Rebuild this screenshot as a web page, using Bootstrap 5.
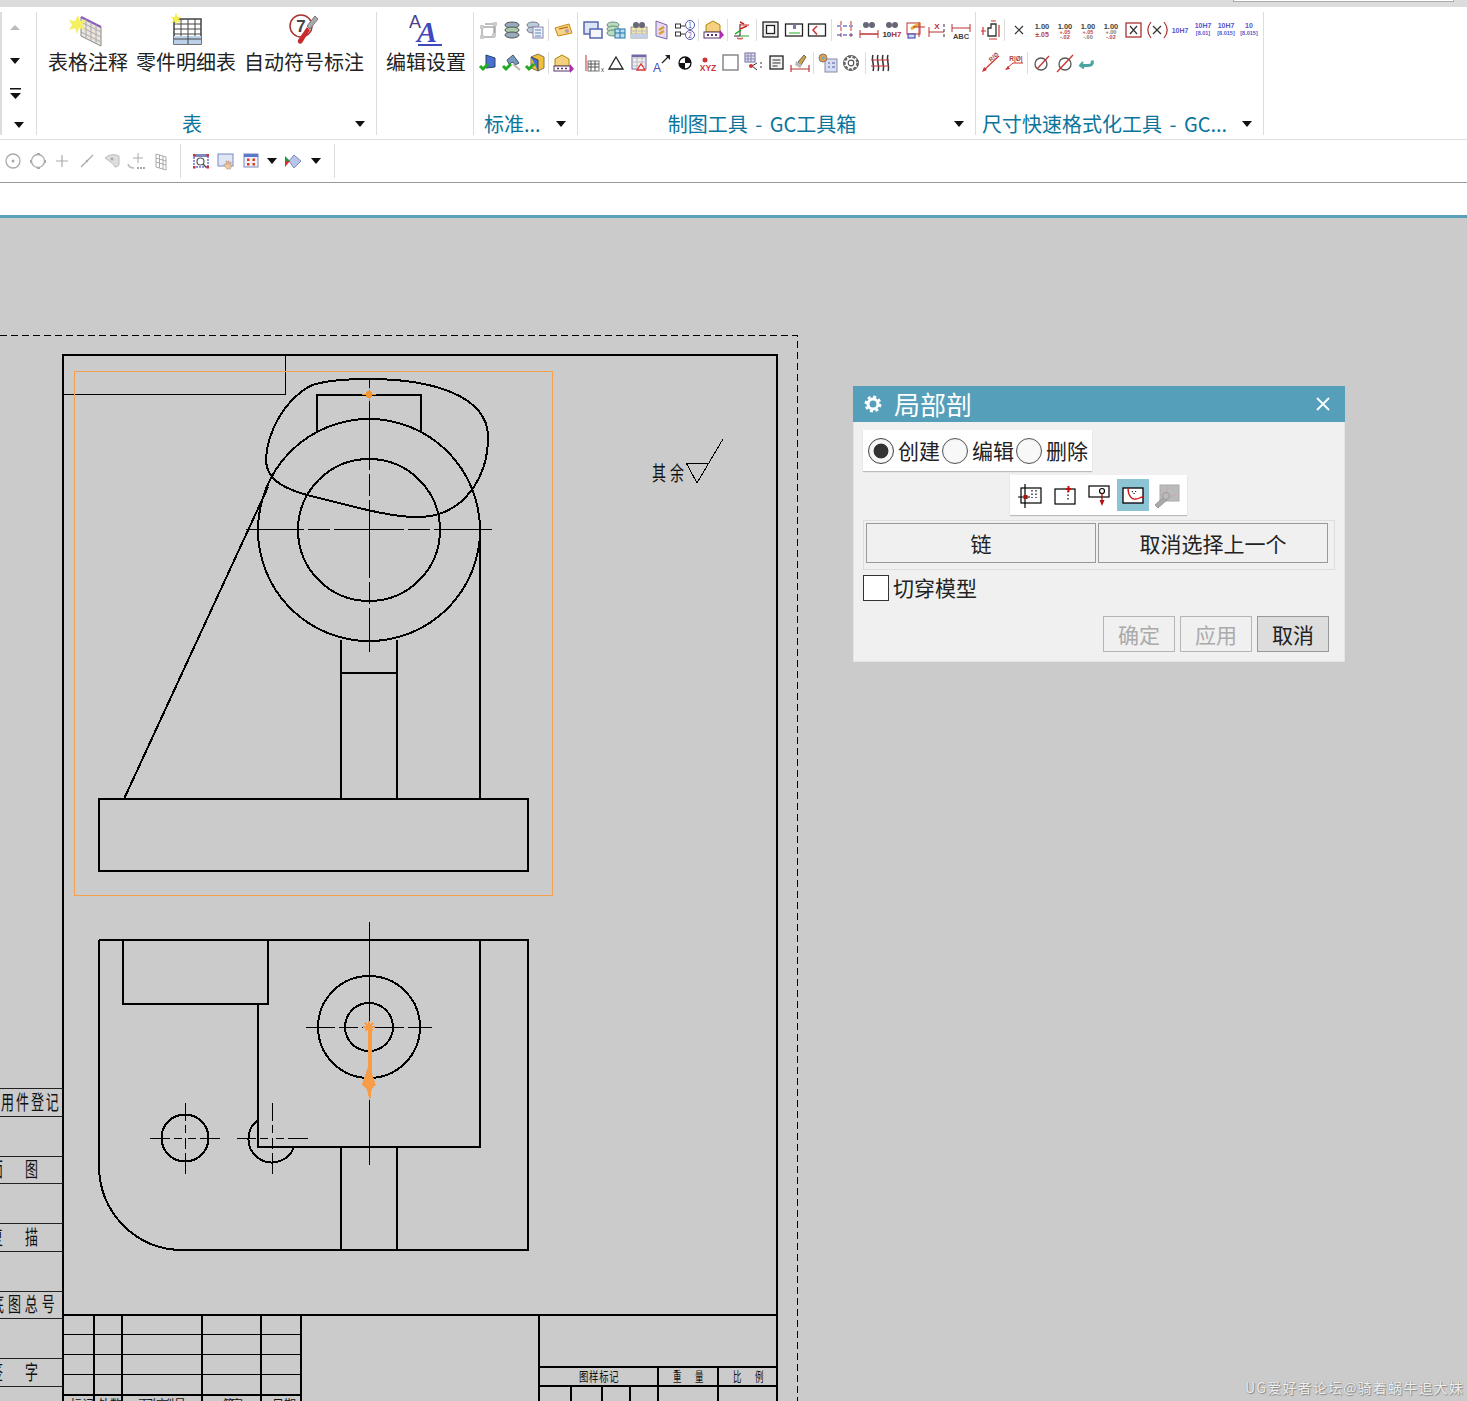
<!DOCTYPE html>
<html lang="zh-CN"><head><meta charset="utf-8"><title>局部剖</title>
<link href="https://cdn.jsdelivr.net/npm/bootstrap@5.3.0/dist/css/bootstrap.min.css" rel="stylesheet">
<style>
:root{--cjk:"Noto Sans CJK SC","Liberation Sans",sans-serif}
html,body{margin:0;height:1401px;overflow:hidden;background:#fff;font-family:var(--cjk);color:#222}
.topstrip{height:7px;background:#dcdcdc;position:relative}
.topbox{position:absolute;left:1233px;top:0;width:221px;height:2px;background:#fff;border:solid #aaa;border-width:0 1px 1px}
.ribbon{height:133px;padding-top:5px;border-bottom:1px solid #ddd}
.grp{height:123px;border-right:1px solid #ddd;flex:none}
.g0{width:37px;position:relative;border-left:2px solid #ddd}
.g1{width:340px}.g2{width:97px}.g3{width:104px}.g4{width:398px}.g5{width:288px}
.bigs{height:101px;padding:1px 0 0 11px;gap:8px}
.bigbtn{font-size:20px;line-height:26px;white-space:nowrap;text-align:center}
.bigbtn svg{display:block;margin:0 auto 2px;width:34px;height:34px}
.labelrow{padding-top:2px}
.glabel{height:22px;font-size:20px;line-height:22px;color:#0a759c;white-space:nowrap;word-spacing:3px}
.gl{text-align:center}
.caret{width:0;height:0;border:5px solid transparent;border-top:6px solid #111;border-bottom:0;flex:none}
.icons{height:101px;padding:7px 0 0 3px;gap:11px}
.ic{width:23px;height:22px;flex:none;display:flex;align-items:center;justify-content:center}
.ic svg{width:22px;height:22px;display:block}
.sp{width:1px;height:22px;background:#ddd;margin:0 2px;flex:none}
.g4 .sp{margin:0 2.400px}
.toolbar{height:43px;border-bottom:1px solid #999;padding-left:1px}
.toolbar .ic{width:24.600px}
.tsep{width:1px;height:34px;background:#ddd;flex:none}
.whitebar{height:32px}
.blueline{height:3px;background:#5a9fb8}
.stage{position:relative;height:1183px;background:#cbcbcb;overflow:hidden}
.stage>svg{display:block}
.drawing text{font-family:var(--cjk);fill:#111}
.wm{position:absolute;right:3px;bottom:5px;color:#efefef;font-size:14px;line-height:18px;letter-spacing:1.200px;text-shadow:1px 1px 1px #888,0 0 1px #888;white-space:nowrap}
.dlg{position:absolute;left:853px;top:168px;width:492px;height:276px;background:#f0f0f0;border:1px solid #e4e4e4;border-top:0}
.dlghead{height:36px;margin:0 -1px;background:#559fba;color:#fff;padding:0 14px 0 10px}
.dlghead h1{font-size:26px;line-height:36px;font-weight:400;margin:0 0 0 11px}
.closex{margin-left:auto}
.dlgbody{padding:8px 9px 0}
.radios{width:229px;height:41px;background:#fff;box-shadow:0 1px 1px #bbb;font-size:21px;padding-left:5px;line-height:41px}
.radios .form-check-input{width:26px;height:26px;margin:0;flex:none;background:#f8f8f8;border:1px solid #555;box-shadow:inset 0 0 0 1px #eee;opacity:1}
.radios .form-check-input:checked{background:radial-gradient(circle,#333 0 7px,#f8f8f8 7.800px);border-color:#444}
.radios label{margin:0 1px 0 4px;width:43px;white-space:nowrap}
.stripwrap{padding:5px 0 4px 147px}
.strip{width:177px;height:40px;background:#fff;box-shadow:0 1px 1px #bbb;padding-left:4px}
.tool{width:34px;height:32px;display:flex;align-items:center;justify-content:center;flex:none}
.tool svg{width:26px;height:26px}
.tool.act{background:#8cc4d4;width:32px;margin:0 1px}
.sel{width:472px;height:50px;border:1px solid #ddd;padding:2px 6px 2px 2px}
.selbtn{width:230px;height:40px;border:1px solid #999;background:#f0f0f0;font-size:21px;line-height:36px;padding:0;border-radius:0;color:#222}
.selbtn:hover{background:#f0f0f0;border-color:#999;color:#222}
.cutrow{font-size:21px;line-height:26px;margin-top:5px;gap:4px}
.cutrow label{line-height:24px;height:26px}
.cutrow .form-check-input{width:26px;height:26px;margin:0;background:#fff;border:1px solid #333;border-radius:0}
.foot{gap:5px;padding:15px 6px 0 0}
.fb{width:72px;height:36px;font-size:21px;line-height:34px;border:1px solid #aaa;background:#f0f0f0;border-radius:0;padding:0;color:#222}
.fb:disabled{color:#aaa;border-color:#b5b5b5;background:#f0f0f0;opacity:1}
.fb.cx{background:#dddddd;border-color:#999}
.tx{font-family:"Liberation Sans",sans-serif;font-weight:700}
</style></head><body>
<div class="topstrip"><div class="topbox"></div></div>
<div class="ribbon d-flex">
<div class="grp g0">
<svg width="34" height="122" viewBox="0 0 34 122"><path d="M8 18h10l-5-5z" fill="#bbb"/><path d="M8 46h10l-5 6z" fill="#111"/><path d="M8 76h11v1.500H8zM8 81h11l-5.500 6z" fill="#111"/><path d="M12 110h10l-5 6z" fill="#111"/></svg>
</div>
<div class="grp g1 d-flex flex-column">
<div class="bigs d-flex">
<div class="bigbtn"><svg viewBox="0 0 34 34" style="transform:translateX(-2px)"><path d="M12 4l20 10v19l-20-10z" fill="#eae4dc" stroke="#888"/><path d="M12 4l20 10" stroke="#8a5cc0" stroke-width="2"/><path d="M12 9l20 10M12 14l20 10M12 19l20 10M17 6.500v19M22 9v19M27 11.500v19" stroke="#aaa" fill="none"/><path d="M9 2l2 6 6-1-4 5 3 5-6-2-2 6-2-6-6 2 3-5-3-5 6 1z" fill="#f4f060"/></svg>表格注释</div>
<div class="bigbtn"><svg viewBox="0 0 34 34"><rect x="5" y="6" width="27" height="25" fill="#fff" stroke="#444" stroke-width="1.500"/><path d="M5 23h27v8H5z" fill="#bcd0ea"/><path d="M5 11h27M5 16h27M5 21h27M5 26h27M12 6v17M19 6v25M26 6v17" stroke="#444"/><path d="M7 0l1.500 4 4-.5-3 3 2.500 3.500-4-1.500L7 12l-1-3.500L2 10l2.500-3.500-3-3 4 .5z" fill="#f4ee50"/></svg>零件明细表</div>
<div class="bigbtn"><svg viewBox="0 0 34 34"><circle cx="14" cy="13" r="11" fill="#fff" stroke="#a33" stroke-width="1.500"/><text x="14" y="19" text-anchor="middle" font-size="17" font-weight="700" fill="#444" font-family="Liberation Sans">7</text><path d="M28 3l3 3-8 10-3-3z" fill="#aaa" stroke="#777"/><path d="M20 14l3 3-8 13c-2 2-5 0-4-3z" fill="#c62c2c"/></svg>自动符号标注</div>
</div>
<div class="d-flex align-items-center labelrow"><div class="glabel gl" style="width:310px">表</div><div class="caret" style="margin-left:8px"></div></div>
</div>
<div class="grp g2 d-flex flex-column">
<div class="bigs d-flex" style="padding-left:9px"><div class="bigbtn"><svg viewBox="0 0 34 34"><text x="0" y="15" font-size="18" font-family="Liberation Sans" fill="#49408a">A</text><text x="8" y="29" font-size="30" font-weight="700" font-style="italic" font-family="Liberation Serif" fill="#3f48bd">A</text><path d="M9 32h24" stroke="#3f48bd" stroke-width="2"/></svg>编辑设置</div></div>
<div style="height:22px"></div>
</div>
<div class="grp g3 d-flex flex-column">
<div class="icons d-flex flex-column">
<div class="d-flex">
<div class="ic"><svg viewBox="0 0 22 22"><path d="M4 8h12v10H4z M7 5h10v9" fill="none" stroke="#aaa" stroke-width="1.500"/><path d="M2 6h4v4H2zM15 3h4v4h-4zM2 16h4v4H2zM14 14h4v4h-4z" fill="#ccc"/></svg></div>
<div class="ic"><svg viewBox="0 0 22 22"><ellipse cx="11" cy="6" rx="7" ry="3" fill="#9ab" stroke="#555"/><ellipse cx="11" cy="11" rx="7" ry="3" fill="#aca" stroke="#555"/><ellipse cx="11" cy="16" rx="7" ry="3" fill="#9ab" stroke="#555"/></svg></div>
<div class="ic"><svg viewBox="0 0 22 22"><ellipse cx="9" cy="6" rx="6" ry="3" fill="#bcd" stroke="#778"/><ellipse cx="9" cy="11" rx="6" ry="3" fill="#bcd" stroke="#778"/><rect x="9" y="8" width="10" height="11" fill="#eef" stroke="#88a"/><path d="M11 11h6M11 14h6M11 17h6" stroke="#58a"/></svg></div>
<div class="sp"></div>
<div class="ic"><svg viewBox="0 0 22 22"><path d="M3 9l14-4 3 9-14 3z" fill="#f5d48a" stroke="#c80"/><path d="M7 10l9-2" stroke="#a50"/><circle cx="15" cy="12" r="2" fill="#b9a"/></svg></div>
</div>
<div class="d-flex">
<div class="ic"><svg viewBox="0 0 22 22"><path d="M8 3l9 3v9l-9 1z" fill="#4a6fd0" stroke="#246"/><path d="M2 14l3 3 5-5" stroke="#2a2" stroke-width="3" fill="none"/></svg></div>
<div class="ic"><svg viewBox="0 0 22 22"><path d="M6 8l6-5 6 8-4 2-2-3-4 2z" fill="#789ac0" stroke="#456"/><path d="M12 12l7 6" stroke="#bba" stroke-width="2"/><path d="M2 14l3 3 5-5" stroke="#2a2" stroke-width="3" fill="none"/></svg></div>
<div class="ic"><svg viewBox="0 0 22 22"><path d="M7 5l7-3 6 3v11l-6 3-7-3z" fill="#f0c038" stroke="#875"/><path d="M7 5l7 3v11" fill="#4a6fd0" stroke="#246"/><path d="M2 14l3 3 5-5" stroke="#2a2" stroke-width="3" fill="none"/></svg></div>
<div class="sp"></div>
<div class="ic"><svg viewBox="0 0 22 22"><path d="M3 7l7-4 7 4v7H3z" fill="#f5d080" stroke="#a80"/><rect x="2" y="14" width="16" height="5" fill="#fff" stroke="#536"/><path d="M5 16.500h2M9 16.500h2M13 16.500h2" stroke="#536" stroke-width="1.500"/><path d="M18 12l4 5-4 4z" fill="#b22ab2"/></svg></div>
</div></div>
<div class="d-flex align-items-center labelrow" style="padding-left:10px"><div class="glabel">标准...</div><div class="caret" style="margin-left:15px"></div></div>
</div>
<div class="grp g4 d-flex flex-column">
<div class="icons d-flex flex-column">
<div class="d-flex">
<div class="ic"><svg viewBox="0 0 22 22"><rect x="2" y="3" width="14" height="12" fill="#dde6f5" stroke="#5566b0" stroke-width="1.500"/><rect x="8" y="10" width="12" height="9" fill="#f4f6fb" stroke="#5566b0" stroke-width="1.500"/></svg></div>
<div class="ic"><svg viewBox="0 0 22 22"><ellipse cx="8" cy="6" rx="6" ry="3" fill="#bdb" stroke="#688"/><ellipse cx="8" cy="10" rx="6" ry="3" fill="#bdb" stroke="#688"/><ellipse cx="8" cy="14" rx="6" ry="3" fill="#bdb" stroke="#688"/><rect x="10" y="10" width="10" height="9" fill="#bde" stroke="#27a"/><path d="M10 14h10M15 10v9" stroke="#27a"/></svg></div>
<div class="ic"><svg viewBox="0 0 22 22"><rect x="3" y="8" width="16" height="11" fill="#f5e6a8" stroke="#999"/><path d="M3 12h16M3 15h16M8 8v11M14 8v11" stroke="#bbb"/><rect x="3" y="15" width="16" height="4" fill="#c5cfe5"/><circle cx="8" cy="6" r="3" fill="#667"/><circle cx="14" cy="6" r="3" fill="#667"/></svg></div>
<div class="ic"><svg viewBox="0 0 22 22"><path d="M5 2l11 4v14L5 17z" fill="#e8d8f0" stroke="#76a"/><path d="M8 11l5-3M8 15l5-3" stroke="#d9a030" stroke-width="2.500"/></svg></div>
<div class="ic"><svg viewBox="0 0 22 22" fill="none" stroke="#333"><rect x="1.500" y="5" width="5" height="4"/><rect x="1.500" y="13" width="5" height="4"/><path d="M7 7h4M7 15h4"/><circle cx="16" cy="6" r="4.500" stroke="#55a"/><circle cx="16" cy="16" r="4.500" stroke="#55a"/><text x="16" y="8.500" text-anchor="middle" font-size="7" fill="#55a" stroke="none">1</text><text x="16" y="18.500" text-anchor="middle" font-size="7" fill="#55a" stroke="none">2</text></svg></div>
<div class="sp"></div>
<div class="ic"><svg viewBox="0 0 22 22"><path d="M4 6l7-4 7 4v7H4z" fill="#f5d080" stroke="#a80"/><rect x="2" y="13" width="16" height="6" fill="#fff" stroke="#536"/><path d="M5 16h2M9 16h2M13 16h2" stroke="#536" stroke-width="2"/><path d="M18 11l4 5-4 4z" fill="#b22ab2"/></svg></div>
<div class="sp"></div>
<div class="ic"><svg viewBox="0 0 22 22" fill="none"><path d="M9 5v12H3" stroke="#222"/><path d="M9 10l7-3M9 3l4 2" stroke="#c22" stroke-width="1.500"/><path d="M4 15l6-4" stroke="#1a1" stroke-width="1.500"/><path d="M9 6h9" stroke="#c22"/><path d="M6 19c2 1 4 1 6 0" stroke="#d66" stroke-width="1.500"/><path d="M9 17H18" stroke="#2a2"/></svg></div>
<div class="sp"></div>
<div class="ic"><svg viewBox="0 0 22 22"><rect x="3" y="3" width="15" height="15" fill="#eee" stroke="#222" stroke-width="1.300"/><rect x="6.500" y="6.500" width="8" height="8" fill="#fff" stroke="#222" stroke-width="1.300"/></svg></div>
<div class="ic"><svg viewBox="0 0 22 22"><rect x="2.500" y="5" width="17" height="12" fill="#fff" stroke="#222" stroke-width="1.300"/><path d="M6 14h11" stroke="#2a2"/><rect x="10" y="5" width="3" height="5" fill="#77a"/></svg></div>
<div class="ic"><svg viewBox="0 0 22 22" fill="none"><rect x="2.500" y="5" width="17" height="12" fill="#fff" stroke="#222" stroke-width="1.300"/><path d="M11 7L7 11l4 4.500" stroke="#c33" stroke-width="1.500"/></svg></div>
<div class="sp"></div>
<div class="ic"><svg viewBox="0 0 22 22" fill="none" stroke-dasharray="4 2"><path d="M6 2v18M16 2v18" stroke="#c33"/><path d="M2 7h18M2 16h18" stroke="#33a"/></svg></div>
<div class="ic"><svg viewBox="0 0 22 22"><circle cx="8" cy="6" r="3" fill="#667"/><circle cx="14" cy="6" r="3" fill="#667"/><path d="M2 11v8M20 11v8" stroke="#b33"/><path d="M2 15h18" stroke="#b33" stroke-width="1.500"/></svg></div>
<div class="ic"><svg viewBox="0 0 22 22"><circle cx="8" cy="6" r="3" fill="#667"/><circle cx="14" cy="6" r="3" fill="#667"/><text x="11" y="18" text-anchor="middle" font-size="8" class="tx" fill="#333">10<tspan fill="#b33">H7</tspan></text></svg></div>
<div class="ic"><svg viewBox="0 0 22 22"><rect x="3" y="4" width="13" height="11" fill="#fff" stroke="#b33"/><path d="M7 10l9-6" stroke="#e8b030" stroke-width="3"/><rect x="4" y="15" width="7" height="4" fill="#cde" stroke="#33a"/><path d="M9 8h12M15 3v15" stroke="#b33"/></svg></div>
<div class="ic"><svg viewBox="0 0 22 22"><path d="M2 8v10" stroke="#b33"/><path d="M2 13h15" stroke="#b33"/><text x="10" y="10" font-size="8" class="tx" text-anchor="middle" fill="#b33">X</text><path d="M17 5v14" stroke="#333" stroke-dasharray="3 2"/></svg></div>
<div class="ic"><svg viewBox="0 0 22 22"><path d="M2 5v8M20 5v8M2 9h18" stroke="#b33"/><text x="11" y="20" font-size="7.500" text-anchor="middle" class="tx" fill="#444">ABC</text></svg></div>
</div>
<div class="d-flex">
<div class="ic"><svg viewBox="0 0 22 22"><rect x="6" y="9" width="11" height="10" fill="#fff" stroke="#777"/><path d="M6 12h11M6 15h11M9 9v10M13 9v10" stroke="#555"/><path d="M4 3v16" stroke="#b33"/><text x="19" y="20" font-size="6" fill="#444">x</text></svg></div>
<div class="ic"><svg viewBox="0 0 22 22"><path d="M11 5l7 12H4z" fill="#fff" stroke="#222" stroke-width="1.300"/></svg></div>
<div class="ic"><svg viewBox="0 0 22 22"><rect x="4" y="3" width="14" height="14" fill="#f0f0f5" stroke="#76a"/><path d="M4 6h14M4 10h14M4 14h14M9 3v14M14 3v14" stroke="#bbb"/><path d="M4 4h14" stroke="#76a" stroke-width="2"/><path d="M13 12l4 6H9z" fill="#fff" stroke="#d33" stroke-width="1.300"/></svg></div>
<div class="ic"><svg viewBox="0 0 22 22"><text x="2" y="20" font-size="12" fill="#3f48bd" font-family="Liberation Sans">A</text><path d="M11 11l7-7" stroke="#222" stroke-width="1.300"/><path d="M19 3v5l-5-5z" fill="#222"/></svg></div>
<div class="ic"><svg viewBox="0 0 22 22"><circle cx="11" cy="11" r="6" fill="#fff" stroke="#111" stroke-width="1.300"/><path d="M11 11V5a6 6 0 0 1 6 6zM11 11v6a6 6 0 0 1-6-6z" fill="#111"/></svg></div>
<div class="ic"><svg viewBox="0 0 22 22"><circle cx="8" cy="8" r="2.500" fill="#c33"/><text x="11" y="19" text-anchor="middle" font-size="8.500" font-family="Liberation Sans" fill="#c33" font-weight="700">XYZ</text></svg></div>
<div class="ic"><svg viewBox="0 0 22 22"><rect x="3" y="3" width="15" height="15" fill="#fff" stroke="#888" stroke-width="1.500"/></svg></div>
<div class="ic"><svg viewBox="0 0 22 22"><rect x="2" y="1" width="10" height="9" fill="#dfe6f5" stroke="#76a"/><path d="M2 4h10M2 7h10M5 1v9M8 1v9" stroke="#88a"/><path d="M9 14l5-3M9 14l5 4" stroke="#333"/><circle cx="8" cy="14" r="2" fill="#c33"/><path d="M18 10v8" stroke="#333" stroke-dasharray="2 2"/></svg></div>
<div class="ic"><svg viewBox="0 0 22 22"><rect x="4" y="4" width="13" height="13" fill="#f2f2f2" stroke="#222" stroke-width="1.300"/><path d="M6.500 8h8M6.500 11h8M6.500 14h5" stroke="#333"/></svg></div>
<div class="ic"><svg viewBox="0 0 22 22"><path d="M9 10l6-7 2 2-5 8z" fill="#c9a34c" stroke="#765"/><path d="M7 9l6 4-2 3-5-3z" fill="#bbb"/><path d="M2 13v7M20 13v7M2 17h18" stroke="#b33" stroke-width="1.200"/></svg></div>
<div class="sp"></div>
<div class="ic"><svg viewBox="0 0 22 22"><rect x="8" y="7" width="12" height="13" fill="#d5ddf0" stroke="#88a"/><path d="M11 11h2M15 11h3M11 15h2M15 15h3" stroke="#55a"/><circle cx="6" cy="6" r="4" fill="#e0a050" stroke="#876"/><circle cx="6" cy="6" r="1.500" fill="#6ac"/></svg></div>
<div class="ic"><svg viewBox="0 0 22 22" fill="none"><circle cx="11" cy="11" r="6.500" stroke="#666" stroke-width="2.500" stroke-dasharray="3 1.500"/><circle cx="11" cy="11" r="7.500" stroke="#666" stroke-width="1"/><circle cx="11" cy="11" r="2.800" stroke="#555" stroke-width="1.200"/></svg></div>
<div class="sp"></div>
<div class="ic"><svg viewBox="0 0 22 22" fill="none" stroke="#333" stroke-width="1.500"><path d="M4 3c-2 5 2 11 0 16M9 3c-2 5 2 11 0 16M14 3c-2 5 2 11 0 16M19 3c-2 5 2 11 0 16"/><path d="M2 8h18M2 14h18" stroke="#c33" stroke-width="1"/></svg></div>
</div></div>
<div class="d-flex align-items-center labelrow"><div class="glabel gl" style="width:368px">制图工具 - GC工具箱</div><div class="caret" style="margin-left:8px"></div></div>
</div>
<div class="grp g5 d-flex flex-column">
<div class="icons d-flex flex-column">
<div class="d-flex">
<div class="ic"><svg viewBox="0 0 22 22" fill="none"><path d="M8 17V9h3V5h5v12z" stroke="#333" stroke-width="1.300"/><path d="M11 2h5M9 20h8M3 8v8M19 6v12" stroke="#c33" stroke-width="1.200"/><path d="M1 12h5" stroke="#c33"/></svg></div>
<div class="sp"></div>
<div class="ic"><svg viewBox="0 0 22 22"><path d="M7 7l8 8M15 7l-8 8" stroke="#333" stroke-width="1.200"/></svg></div>
<div class="ic"><svg viewBox="0 0 22 22"><text x="11" y="10" text-anchor="middle" font-size="7.500" class="tx" fill="#444">1.00</text><text x="11" y="18" text-anchor="middle" font-size="7" class="tx" fill="#b44">±.05</text></svg></div>
<div class="ic"><svg viewBox="0 0 22 22"><text x="11" y="10" text-anchor="middle" font-size="7.500" class="tx" fill="#444">1.00</text><text x="11" y="15" text-anchor="middle" font-size="5.500" class="tx" fill="#b44">+.05</text><text x="11" y="20" text-anchor="middle" font-size="5.500" class="tx" fill="#b44">-.02</text></svg></div>
<div class="ic"><svg viewBox="0 0 22 22"><text x="11" y="10" text-anchor="middle" font-size="7.500" class="tx" fill="#444">1.00</text><text x="11" y="15" text-anchor="middle" font-size="5.500" class="tx" fill="#b44">+.05</text><text x="11" y="20" text-anchor="middle" font-size="5.500" class="tx" fill="#777">-.00</text></svg></div>
<div class="ic"><svg viewBox="0 0 22 22"><text x="11" y="10" text-anchor="middle" font-size="7.500" class="tx" fill="#444">1.00</text><text x="11" y="15" text-anchor="middle" font-size="5.500" class="tx" fill="#777">+.00</text><text x="11" y="20" text-anchor="middle" font-size="5.500" class="tx" fill="#b44">-.02</text></svg></div>
<div class="ic"><svg viewBox="0 0 22 22"><rect x="3" y="4" width="15" height="14" fill="#fff" stroke="#a33" stroke-width="1.300"/><path d="M7 7l7 8M14 7l-7 8" stroke="#333" stroke-width="1.200"/></svg></div>
<div class="ic"><svg viewBox="0 0 22 22" fill="none"><path d="M5 3c-4 5-4 11 0 16M18 3c4 5 4 11 0 16" stroke="#a33" stroke-width="1.200"/><path d="M7 7l8 8M15 7l-8 8" stroke="#333" stroke-width="1.200"/></svg></div>
<div class="ic"><svg viewBox="0 0 22 22"><text x="11" y="14" text-anchor="middle" font-size="7" class="tx" fill="#55c">10H7</text></svg></div>
<div class="ic"><svg viewBox="0 0 22 22"><text x="11" y="9" text-anchor="middle" font-size="7" class="tx" fill="#55c">10H7</text><text x="11" y="16" text-anchor="middle" font-size="5.500" class="tx" fill="#55c">[8.01]</text></svg></div>
<div class="ic"><svg viewBox="0 0 22 22"><text x="11" y="9" text-anchor="middle" font-size="7" class="tx" fill="#55c">10H7</text><text x="11" y="16" text-anchor="middle" font-size="5.500" class="tx" fill="#55c">[8.015]</text></svg></div>
<div class="ic"><svg viewBox="0 0 22 22"><text x="11" y="9" text-anchor="middle" font-size="7" class="tx" fill="#55c">10</text><text x="11" y="16" text-anchor="middle" font-size="5.500" class="tx" fill="#55c">[8.015]</text></svg></div>
</div>
<div class="d-flex">
<div class="ic"><svg viewBox="0 0 22 22"><path d="M4 18L19 4" stroke="#c33" stroke-width="1.100"/><path d="M2 20l5-2-3-3z" fill="#c33"/><text x="11" y="10" font-size="6" class="tx" fill="#a44" transform="rotate(-42 11 10)">R/Ø</text></svg></div>
<div class="ic"><svg viewBox="0 0 22 22"><path d="M3 17l7-6h10" stroke="#c33" fill="none"/><path d="M2 18l5-1-2-3z" fill="#c33"/><text x="13" y="9" font-size="6.500" class="tx" text-anchor="middle" fill="#a44">R|Ø|</text></svg></div>
<div class="sp"></div>
<div class="ic"><svg viewBox="0 0 22 22" fill="none"><circle cx="10" cy="12" r="6" stroke="#555" stroke-width="1.300"/><path d="M6 17L18 4" stroke="#c33" stroke-width="1.300"/></svg></div>
<div class="ic"><svg viewBox="0 0 22 22" fill="none"><circle cx="11" cy="12" r="6" stroke="#555" stroke-width="1.300"/><path d="M3 20L19 3" stroke="#c33" stroke-width="1.300"/></svg></div>
<div class="ic"><svg viewBox="0 0 22 22" fill="none"><path d="M6 10l-3 3.500 4 3" stroke="#4aa5a0" stroke-width="2"/><path d="M4 13.500h7c4 0 5-2 4-5" stroke="#4aa5a0" stroke-width="3"/></svg></div>
</div></div>
<div class="d-flex align-items-center labelrow" style="padding-left:6px"><div class="glabel" style="width:250px">尺寸快速格式化工具 - GC...</div><div class="caret" style="margin-left:10px"></div></div>
</div>
</div>
<div class="toolbar d-flex align-items-center">
<div class="ic"><svg viewBox="0 0 22 22"><circle cx="11" cy="11" r="7" fill="#fff" stroke="#aaa" stroke-width="1.300"/><circle cx="11" cy="11" r="1.500" fill="#aaa"/></svg></div>
<div class="ic"><svg viewBox="0 0 22 22"><circle cx="11" cy="11" r="6.500" fill="#fff" stroke="#aaa" stroke-width="1.300"/><path d="M10 3h3v2h-3zM10 17h3v2h-3zM3 10h2v3H3zM17 10h2v3h-2z" fill="#aaa"/></svg></div>
<div class="ic"><svg viewBox="0 0 22 22"><path d="M11 5v12M5 11h12" stroke="#aaa" stroke-width="1.200"/></svg></div>
<div class="ic"><svg viewBox="0 0 22 22"><path d="M5 17L17 5" stroke="#aaa" stroke-width="1.200"/><circle cx="11" cy="11" r="1.200" fill="#aaa"/></svg></div>
<div class="ic"><svg viewBox="0 0 22 22"><path d="M4 8c4-4 10-4 14-2v8c0 2-2 3-4 3-1-3-6-6-10-9z" fill="#ddd" stroke="#bbb"/><circle cx="11" cy="9" r="1.500" fill="#aaa"/></svg></div>
<div class="ic"><svg viewBox="0 0 22 22" fill="none"><path d="M13 3v10M8 8h10" stroke="#aaa"/><path d="M3 14c1 4 4 4 6 4" stroke="#bbb" stroke-width="1.500"/><path d="M12 18h8" stroke="#aaa" stroke-width="2" stroke-dasharray="2 1"/></svg></div>
<div class="ic"><svg viewBox="0 0 22 22" fill="none" stroke="#aaa"><path d="M6 4l10 3v13L6 17zM6 8l10 3M6 12l10 3M9.500 5v13M13 6v13"/></svg></div>
<div class="tsep" style="margin:0 8px 0 7px"></div>
<div class="ic"><svg viewBox="0 0 22 22" fill="none"><rect x="4" y="5" width="14" height="12" stroke="#22c" stroke-dasharray="2 1"/><rect x="4" y="4" width="14" height="3" fill="#7a8ac0"/><circle cx="10.500" cy="11.500" r="3.500" stroke="#555" stroke-width="1.200"/><path d="M13 14l3 3" stroke="#555" stroke-width="1.500"/><path d="M3 4h2.500v2.500H3zM16.500 4H19v2.500h-2.500zM3 16h2.500v2.500H3zM16.500 16H19v2.500h-2.500z" fill="#c33"/></svg></div>
<div class="ic"><svg viewBox="0 0 22 22"><rect x="3" y="4" width="15" height="12" fill="#dfe6f5" stroke="#7a8ac0"/><path d="M12 19c-2-2-3-3-3-5l2 1v-4h1v3h1v-3h1v3h1v-2h1v6c0 1-1 1-2 1z" fill="#eac8a0" stroke="#a87" stroke-width=".5"/></svg></div>
<div class="ic"><svg viewBox="0 0 22 22"><rect x="4" y="4" width="14" height="13" fill="#f0f0f8" stroke="#7a8ac0"/><rect x="4" y="4" width="14" height="3" fill="#5a78c8"/><path d="M7 8.500h2.500V11H7zM12.500 8.500H15V11h-2.500zM7 13h2.500v2.500H7zM12.500 13H15v2.500h-2.500z" fill="#e03a20"/></svg></div>
<div class="caret" style="margin:0 8px 0 4px"></div>
<div class="ic" style="margin-left:-4px"><svg viewBox="0 0 22 22"><path d="M12 5l7 6-7 7-5-7z" fill="#b8c4e8" stroke="#7a8ac0"/><path d="M3 6v5h5z" fill="#1a9a3a"/><path d="M3 17v-6h5z" fill="#c33"/></svg></div>
<div class="caret" style="margin:0 13px 0 5px"></div>
<div class="tsep"></div>
</div>
<div class="whitebar"></div>
<div class="blueline"></div>
<div class="stage">
<svg class="drawing" width="1467" height="1183" viewBox="0 218 1467 1183" fill="none" stroke="#000" stroke-width="2" shape-rendering="crispEdges">
<path d="M0 335H797.500V1401" stroke-width="1" stroke-dasharray="7 4"/>
<path d="M63 1401V355H777V1401"/>
<path d="M63 394.500H285.500V355" stroke-width="1"/>
<rect x="74.500" y="371.500" width="478" height="524" stroke="#f4a04c" stroke-width="1"/>
<circle cx="369" cy="530" r="111"/><circle cx="369" cy="530" r="71"/>
<path d="M246 529.500H304M308 529.500H330M334 529.500H404M408 529.500H430M434 529.500H492M369.500 379V470M369.500 474V496M369.500 500V578M369.500 582V604M369.500 608V652" stroke-width="1"/>
<path d="M317 431V395H421V432"/>
<path d="M369 379C430 379 488 395 488 437C488 478 463 516 420 517C390 518 345 504 315 497C285 490 265 480 266 458C268 430 285 400 310 386C325 380 345 379 369 379Z"/>
<path d="M124 799L268 487M480 540V799M341 640V799M397 640V799M341 673H397"/>
<rect x="99" y="799" width="429" height="72"/>
<path d="M362 394.500H376M369 388V401" stroke="#f4962f" stroke-width="1"/><circle cx="369" cy="394.500" r="3.500" fill="#f4962f" stroke="none"/>
<path d="M99 940H528V1250H183C135 1250 99 1212 99 1165V940M123 940V1004H268V940M258 1004V1147H480V940M341 1147V1250M397 1147V1250"/>
<circle cx="369" cy="1027" r="51"/><circle cx="369" cy="1027" r="24"/>
<path d="M306 1027H335M339 1027H358M362 1027H404M408 1027H432M369.500 922V1165" stroke-width="1"/>
<circle cx="185" cy="1138" r="23.500"/>
<path d="M258 1120A23.500 23.500 0 1 0 294 1147"/>
<path d="M150 1138H170M174 1138H182M188 1138H196M200 1138H220M185.500 1103V1121M185.500 1125V1133M185.500 1138V1149M185.500 1153V1174M237 1138H256M260 1138H268M276 1138H284M288 1138H308M272.500 1103V1121M272.500 1125V1133M272.500 1138V1149M272.500 1153V1174" stroke-width="1"/>
<path d="M368 1030H371V1078H368z" fill="#f89c48" stroke="#f89c48" stroke-width="1"/>
<path d="M363 1027H375M369 1021V1034M365 1023L373 1031M373 1023L365 1031" stroke="#f89c48" stroke-width="1.500"/>
<path d="M369 1064L376 1085L372 1088L370 1102L367 1090L362 1085Z" fill="#f89c48" stroke="none"/>
<path d="M0 1088.500H63M0 1116.500H63M0 1156.500H63M0 1183.500H63M0 1223.500H63M0 1251.500H63M0 1291.500H63M0 1318.500H63M0 1358.500H63M0 1386.500H63" stroke="#222" stroke-width="1"/>
<path d="M63 1315H777M539 1315V1401M94 1315V1401M122 1315V1401M202 1315V1401M261 1315V1401M301 1315V1401M63 1394.500H301M539 1367H777M539 1386H777M658 1367V1401M718 1367V1401M571 1386V1401M602 1386V1401M630 1386V1401"/>
<path d="M63 1334.500H301M63 1354.500H301M63 1374.500H301" stroke-width="1"/>
<path d="M686.500 463.500H708M686.500 463.500L697 483L723 439" stroke-width="1"/>
<g stroke="none" font-size="20" shape-rendering="auto">
<text transform="translate(1 1110) scale(.65 1)" letter-spacing="3">用件登记</text>
<text transform="translate(-10 1177) scale(.65 1)">面</text><text transform="translate(25 1177) scale(.65 1)">图</text>
<text transform="translate(-10 1245) scale(.65 1)">复</text><text transform="translate(25 1245) scale(.65 1)">描</text>
<text transform="translate(-9 1312) scale(.65 1)" letter-spacing="6">底图总号</text>
<text transform="translate(-10 1380) scale(.65 1)">签</text><text transform="translate(25 1380) scale(.65 1)">字</text>
<text transform="translate(652 481) scale(.7 1)">其</text><text transform="translate(670 481) scale(.7 1)">余</text>
<g font-size="13">
<text transform="translate(579 1381) scale(.72 1)" letter-spacing="1">图样标记</text>
<text transform="translate(673 1381) scale(.65 1)">重</text><text transform="translate(695 1381) scale(.65 1)">量</text><text transform="translate(733 1381) scale(.65 1)">比</text><text transform="translate(755 1381) scale(.65 1)">例</text>
<text x="70" y="1409" font-size="12">标记</text><text x="98" y="1409" font-size="12">处数</text><text x="138" y="1409" font-size="12" textLength="48" lengthAdjust="spacing">更改文件号</text><text x="223" y="1409" font-size="12" textLength="20" lengthAdjust="spacing">签字</text><text x="272" y="1409" font-size="12">日期</text></g>
</g>
</svg>
<div class="wm">UG爱好者论坛@骑着蜗牛追大妹</div>
<div class="dlg">
<div class="dlghead d-flex align-items-center">
<svg width="20" height="20" viewBox="0 0 20 20" fill="none" stroke="#fff"><circle cx="10" cy="10" r="5" stroke-width="3"/><circle cx="10" cy="10" r="7.200" stroke-width="2.500" stroke-dasharray="3 2.650"/></svg>
<h1>局部剖</h1>
<svg class="closex" width="16" height="16" viewBox="0 0 16 16" stroke="#fff" stroke-width="1.800"><path d="M2 2l12 12M14 2L2 14"/></svg>
</div>
<div class="dlgbody">
<div class="radios d-flex align-items-center">
<input class="form-check-input" type="radio" name="m" id="r1" checked><label for="r1">创建</label>
<input class="form-check-input" type="radio" name="m" id="r2"><label for="r2">编辑</label>
<input class="form-check-input" type="radio" name="m" id="r3"><label for="r3">删除</label>
</div>
<div class="stripwrap" style="padding-top:4px;padding-bottom:5px"><div class="strip d-flex align-items-center">
<div class="tool"><svg viewBox="0 0 26 26" fill="none" stroke="#000" stroke-width="1.200"><rect x="3" y="6" width="20" height="15"/><path d="M0 15h12M7 2v24"/><rect x="5.500" y="13" width="4" height="4" fill="#a11" stroke="none"/><path d="M14 8v8M18 8v8" stroke-dasharray="1.500 2"/></svg></div>
<div class="tool"><svg viewBox="0 0 26 26" fill="none" stroke="#000" stroke-width="1.200"><rect x="3" y="7" width="20" height="15"/><path d="M16 9v9" stroke-dasharray="1.500 2"/><path d="M14 7h5M16.500 4v6" stroke="#b11" stroke-width="2"/></svg></div>
<div class="tool"><svg viewBox="0 0 26 26" fill="none" stroke="#000" stroke-width="1.200"><rect x="3" y="4" width="20" height="11"/><circle cx="16" cy="9" r="2.500"/><path d="M16 11v11" stroke="#800"/><path d="M13.500 18h5L16 24z" fill="#b11" stroke="none"/></svg></div>
<div class="tool act"><svg viewBox="0 0 26 26" fill="none" stroke="#000" stroke-width="1.300"><rect x="3" y="6" width="20" height="15" fill="#fff"/><path d="M8 6c0 8 4 12 8 11 3 0 4-2 7-2" stroke="#c11"/><path d="M12 9l2 3 2-3" stroke-dasharray="1.500 1.500" stroke-width="1"/></svg></div>
<div class="tool"><svg viewBox="0 0 26 26"><rect x="6" y="3" width="19" height="16" fill="#bbb" stroke="#aaa"/><path d="M6 13c6 0 8-4 8-10M14 14c5 1 8-2 11-2" stroke="#caa" fill="none"/><path d="M1 23l10-9 3 3-10 9z" fill="#aaa" stroke="#999"/><circle cx="12" cy="14" r="3.500" fill="#bbb" stroke="#999"/></svg></div>
</div></div>
<div class="sel d-flex justify-content-between">
<button type="button" class="btn selbtn">链</button><button type="button" class="btn selbtn">取消选择上一个</button>
</div>
<div class="cutrow d-flex align-items-center"><input class="form-check-input" type="checkbox" id="c1"><label for="c1">切穿模型</label></div>
<div class="foot d-flex justify-content-end">
<button type="button" class="btn fb" disabled>确定</button><button type="button" class="btn fb" disabled>应用</button><button type="button" class="btn fb cx">取消</button>
</div>
</div>
</div>
</div>
<script src="https://cdn.jsdelivr.net/npm/bootstrap@5.3.0/dist/js/bootstrap.bundle.min.js"></script>
</body></html>
